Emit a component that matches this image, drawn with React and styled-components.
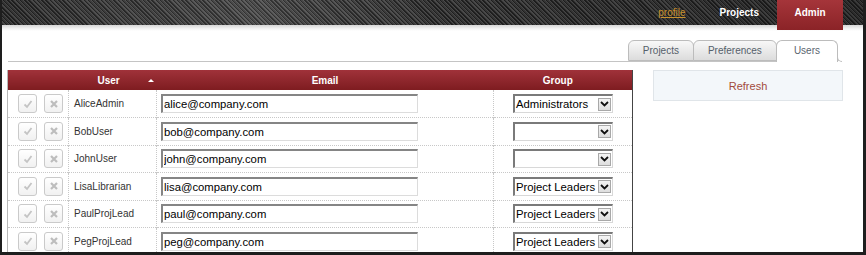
import React from 'react';
import styled, { createGlobalStyle } from 'styled-components';

const GlobalStyle = createGlobalStyle`
	body {
		margin: 0;
		font-family: 'Liberation Sans', Arial, sans-serif;
		background: #fff;
	}
`;

const users = [
	{ name: 'AliceAdmin', email: 'alice@company.com', group: 'Administrators' },
	{ name: 'BobUser', email: 'bob@company.com', group: '' },
	{ name: 'JohnUser', email: 'john@company.com', group: '' },
	{ name: 'LisaLibrarian', email: 'lisa@company.com', group: 'Project Leaders' },
	{ name: 'PaulProjLead', email: 'paul@company.com', group: 'Project Leaders' },
	{ name: 'PegProjLead', email: 'peg@company.com', group: 'Project Leaders' },
];

function CheckIcon() {
	return (
		<svg width="10" height="10" viewBox="0 0 10 10">
			<path d="M1.5 5.5 L4 8 L8.5 2" fill="none" stroke="#c4c4c4" strokeWidth="1.8" />
		</svg>
	);
}

function CrossIcon() {
	return (
		<svg width="10" height="10" viewBox="0 0 10 10">
			<path d="M2 2 L8 8 M8 2 L2 8" fill="none" stroke="#bdbdbd" strokeWidth="2.2" />
		</svg>
	);
}

function Chevron() {
	return (
		<svg width="9" height="6" viewBox="0 0 9 6">
			<path d="M1 1 L4.5 4.5 L8 1" fill="none" stroke="#111" strokeWidth="1.8" />
		</svg>
	);
}

function App() {
	return (
		<Frame>
			<GlobalStyle />
			<TopBar>
				<NavLink href="#">profile</NavLink>
				<NavItem>Projects</NavItem>
				<NavTab>Admin</NavTab>
			</TopBar>
			<Shade />
			<TabBar>
				<Tab>Projects</Tab>
				<Tab>Preferences</Tab>
				<Tab $active>Users</Tab>
			</TabBar>
			<Main>
				<Table>
					<colgroup>
						<col style={{ width: 61 }} />
						<col style={{ width: 88 }} />
						<col style={{ width: 337 }} />
						<col style={{ width: 139 }} />
					</colgroup>
					<thead>
						<tr>
							<HeadCell />
							<HeadCell $align="left">
								<SortHead>
									User
									<SortArrow />
								</SortHead>
							</HeadCell>
							<HeadCell>Email</HeadCell>
							<HeadCell $pad="0 10px 0 0">Group</HeadCell>
						</tr>
					</thead>
					<tbody>
						{users.map((u) => (
							<Row key={u.name}>
								<Cell>
									<Actions>
										<IconButton>
											<CheckIcon />
										</IconButton>
										<IconButton>
											<CrossIcon />
										</IconButton>
									</Actions>
								</Cell>
								<Cell $pad="0 0 0 5px">{u.name}</Cell>
								<Cell $pad="0 0 0 4px">
									<EmailInput defaultValue={u.email} />
								</Cell>
								<Cell $pad="0 0 0 19px" $last>
									<Select>
										<SelectText>{u.group}</SelectText>
										<SelectButton>
											<Chevron />
										</SelectButton>
									</Select>
								</Cell>
							</Row>
						))}
					</tbody>
				</Table>
				<Panel>Refresh</Panel>
			</Main>
		</Frame>
	);
}

export default App;

const Frame = styled.div`
	width: 866px;
	height: 255px;
	box-sizing: border-box;
	border: 0 solid #1e1e1e;
	border-width: 0 3px 3px 2px;
	overflow: hidden;
	background: #fff;
`;

const TopBar = styled.div`
	height: 25px;
	display: flex;
	justify-content: flex-end;
	align-items: flex-start;
	padding-right: 20px;
	background: linear-gradient(
			90deg,
			rgba(0, 0, 0, 0.15),
			rgba(255, 255, 255, 0.08) 30%,
			rgba(0, 0, 0, 0.1) 50%,
			rgba(0, 0, 0, 0.3) 100%
		),
		repeating-linear-gradient(
			45deg,
			#222 0 1px,
			#3d3d3d 1px 2px,
			#535353 2px 3px
		);
	font-size: 10px;
	font-weight: bold;
`;

const NavLink = styled.a`
	line-height: 26px;
	color: #c8922e;
	font-weight: normal;
	text-decoration: underline;
	margin-right: 34px;
`;

const NavItem = styled.span`
	line-height: 26px;
	color: #fff;
	margin-right: 18px;
`;

const NavTab = styled.span`
	height: 30px;
	line-height: 26px;
	width: 66px;
	text-align: center;
	color: #fff;
	background: linear-gradient(#a5353a, #8b2327);
	position: relative;
	z-index: 1;
`;

const Shade = styled.div`
	height: 6px;
	background: linear-gradient(#d6d6d6, #f2f2f2 60%, #fff);
`;

const TabBar = styled.div`
	display: flex;
	justify-content: flex-end;
	align-items: flex-end;
	margin: 8px 25px 0 6px;
	border-bottom: 1px solid #c4c4c4;
	height: 22px;
`;

const Tab = styled.div`
	position: relative;
	height: ${(p) => (p.$active ? '22px' : '21px')};
	margin-bottom: ${(p) => (p.$active ? '-1px' : '0')};
	box-sizing: border-box;
	padding: 0 ${(p) => (p.$active ? '17px' : '14px')};
	line-height: 20px;
	font-size: 10px;
	color: ${(p) => (p.$active ? '#5b6670' : '#55606a')};
	border: 1px solid #bcbcbc;
	border-bottom: ${(p) => (p.$active ? 'none' : '1px solid #bcbcbc')};
	border-radius: 6px 6px 0 0;
	margin-left: -1px;
	background: ${(p) => (p.$active ? '#fff' : 'linear-gradient(#f8f8f8, #dcdcdc)')};

	${(p) =>
		p.$active &&
		`
		&::after {
			content: '';
			position: absolute;
			right: -5px;
			bottom: 0;
			width: 4px;
			height: 5px;
			border-left: 1px solid #bcbcbc;
			border-bottom: 1px solid #bcbcbc;
			border-bottom-left-radius: 5px;
		}
	`}
`;

const Main = styled.div`
	display: flex;
	align-items: flex-start;
	gap: 20px;
	margin: 8px 0 0 5px;
`;

const Table = styled.table`
	width: 626px;
	table-layout: fixed;
	border-collapse: collapse;
	border-left: 1px solid #b8b8b8;
	border-right: 1px solid #444;
	font-size: 10px;
	color: #333;
`;

const HeadCell = styled.th`
	height: 20px;
	padding: ${(p) => p.$pad || '0'};
	text-align: ${(p) => p.$align || 'center'};
	color: #fff;
	font-weight: bold;
	font-size: 10px;
	background: linear-gradient(#a0323a, #7e1c20);
`;

const SortHead = styled.span`
	display: flex;
	align-items: center;
	gap: 28px;
	padding-left: 29px;
`;

const SortArrow = styled.span`
	width: 0;
	height: 0;
	border-left: 3px solid transparent;
	border-right: 3px solid transparent;
	border-bottom: 3px solid #fff;
`;

const Row = styled.tr`
	height: 27.5px;
	border-bottom: 1px dotted #c8c8c8;
`;

const Cell = styled.td`
	padding: ${(p) => p.$pad || '0'};
	border-right: ${(p) => (p.$last ? 'none' : '1px dotted #c8c8c8')};
	vertical-align: middle;
	white-space: nowrap;
`;

const Actions = styled.div`
	display: flex;
	gap: 7px;
	padding-left: 10px;
`;

const IconButton = styled.button`
	width: 19px;
	height: 19px;
	padding: 0;
	display: flex;
	align-items: center;
	justify-content: center;
	border: 1px solid #cacaca;
	border-radius: 3px;
	background: linear-gradient(#fff, #f1f1f1);
`;

const EmailInput = styled.input`
	display: block;
	width: 257px;
	height: 19px;
	box-sizing: border-box;
	padding: 0 0 0 1px;
	font-family: 'Liberation Sans', Arial, sans-serif;
	font-size: 11.3px;
	color: #000;
	border-style: solid;
	border-width: 2px 1px 1px 2px;
	border-color: #858585 #dcdcdc #dcdcdc #858585;
	outline: none;
	background: #fff;
`;

const Select = styled.div`
	display: flex;
	align-items: center;
	width: 100px;
	height: 19px;
	box-sizing: border-box;
	border-style: solid;
	border-width: 2px 1px 1px 2px;
	border-color: #7a7a7a #d8d8d8 #d8d8d8 #7a7a7a;
	background: #fff;
`;

const SelectText = styled.span`
	flex: 1;
	overflow: hidden;
	padding-left: 1px;
	font-size: 11.3px;
	color: #000;
`;

const SelectButton = styled.span`
	width: 13px;
	height: 13px;
	margin-right: 1px;
	box-sizing: border-box;
	display: flex;
	align-items: center;
	justify-content: center;
	border: 1px solid #a8a8a8;
	background: linear-gradient(#f4f4f4, #dedede);
`;

const Panel = styled.div`
	width: 190px;
	height: 31px;
	box-sizing: border-box;
	display: flex;
	align-items: center;
	justify-content: center;
	background: #f3f7fa;
	border: 1px solid #e0e5e9;
	color: #a24a3c;
	font-size: 11px;
`;
